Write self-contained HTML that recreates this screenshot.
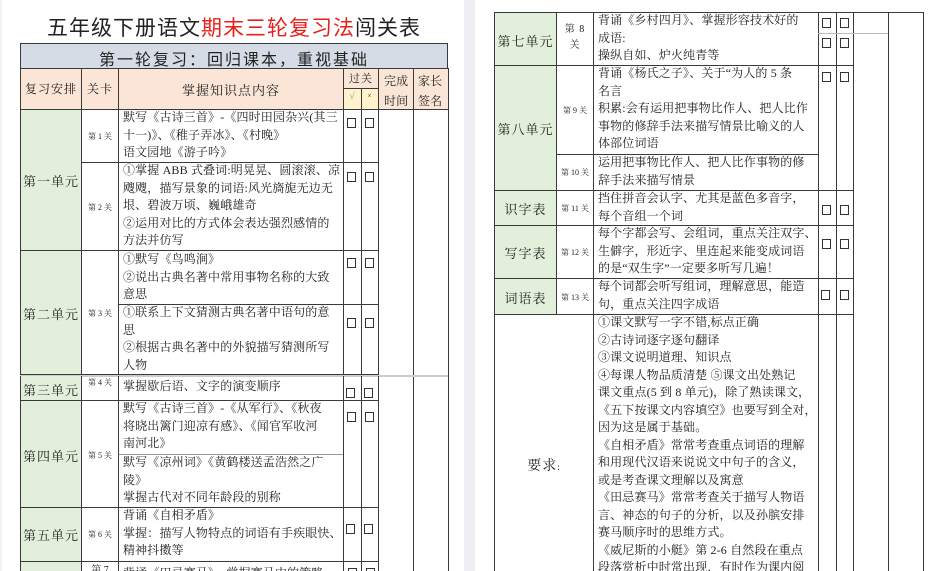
<!DOCTYPE html>
<html style="width:938px;height:571px;overflow:hidden"><head><meta charset="utf-8"><style>
*{margin:0;padding:0;box-sizing:border-box}
body{width:938px;height:571px;overflow:hidden;background:#fff;position:relative;font-family:"Liberation Serif","Noto Serif CJK SC",serif;color:#222}
.c{position:absolute;border:1px solid #3a3a3a}
.t{position:absolute;font-size:12px;line-height:17.5px;white-space:nowrap;letter-spacing:0.15px;overflow:hidden}
.u{position:absolute;font-size:13px;text-align:center;white-space:nowrap;letter-spacing:1px}
.k{position:absolute;font-size:8px;text-align:center;white-space:nowrap}
.b{position:absolute;width:9px;height:10px;border:1px solid #333;background:#fff}
.g{background:#e2efda}
.p{background:#fbe5d6}
</style></head><body>
<div style="position:absolute;left:464px;top:0;width:11px;height:571px;background:#eeeff4"></div>
<div style="position:absolute;left:0;top:0;width:2px;height:571px;background:#f2f2f5"></div>

<div style="position:absolute;left:20px;top:12px;width:428px;text-align:center;font-family:'Liberation Sans','Noto Sans CJK SC',sans-serif;font-size:21px;letter-spacing:1px;color:#222">五年级下册语文<span style="color:#e8201a">期末三轮复习法</span>闯关表</div>
<div class="c" style="left:20px;top:43px;width:428px;height:26px;background:#d6dce5;border-width:1px 1px 0 1px"></div>
<div class="u" style="left:20px;top:46px;width:428px;font-size:16px;letter-spacing:2px;font-family:'Liberation Sans','Noto Sans CJK SC',sans-serif">第一轮复习：回归课本，重视基础</div>
<div class="c p" style="left:20px;top:68px;width:62px;height:42px"></div>
<div class="u" style="left:20px;top:80px;width:62px;font-size:12px">复习安排</div>
<div class="c p" style="left:81px;top:68px;width:38px;height:42px"></div>
<div class="u" style="left:81px;top:80px;width:38px;font-size:12px">关卡</div>
<div class="c p" style="left:118px;top:68px;width:226px;height:42px"></div>
<div class="u" style="left:118px;top:80px;width:226px;font-size:13px">掌握知识点内容</div>
<div class="c p" style="left:343px;top:68px;width:36px;height:21px"></div>
<div class="u" style="left:343px;top:70px;width:36px;font-size:11px">过关</div>
<div class="c" style="left:343px;top:88px;width:19px;height:22px;background:#fff2cc"></div>
<div class="c" style="left:361px;top:88px;width:18px;height:22px;background:#fff2cc"></div>
<div class="u" style="left:343px;top:91px;width:19px;font-size:10px;color:#8a8">√</div>
<div class="u" style="left:361px;top:92px;width:18px;font-size:7px">×</div>
<div class="c p" style="left:378px;top:68px;width:36px;height:42px"></div>
<div class="t" style="left:384px;top:71px;line-height:20px;font-size:12px">完成<br>时间</div>
<div class="c p" style="left:413px;top:68px;width:36px;height:42px"></div>
<div class="t" style="left:418px;top:71px;line-height:20px;font-size:12px">家长<br>签名</div>

<div class="c" style="left:378px;top:109px;width:36px;height:470px"></div>
<div class="c" style="left:413px;top:109px;width:36px;height:470px"></div>

<div class="c g" style="left:20px;top:109px;width:62px;height:142px"></div>
<div class="u" style="left:20px;top:171px;width:62px">第一单元</div>
<div class="c" style="left:81px;top:109px;width:38px;height:54px"></div><div class="k" style="left:81px;top:131px;width:38px">第 1 关</div>
<div class="c" style="left:118px;top:109px;width:226px;height:54px"></div>
<div class="t" style="left:123px;top:109px;width:219px">默写《古诗三首》-《四时田园杂兴(其三<br>十一)》、《稚子弄冰》、《村晚》<br>语文园地《游子吟》</div>
<div class="c" style="left:343px;top:109px;width:19px;height:54px"></div><div class="c" style="left:361px;top:109px;width:18px;height:54px"></div>
<div class="b" style="left:347px;top:118px"></div><div class="b" style="left:365px;top:118px"></div>

<div class="c" style="left:81px;top:162px;width:38px;height:89px"></div><div class="k" style="left:81px;top:202px;width:38px">第 2 关</div>
<div class="c" style="left:118px;top:162px;width:226px;height:89px"></div>
<div class="t" style="left:123px;top:162px;width:219px">①掌握 ABB 式叠词:明晃晃、圆滚滚、凉<br>飕飕，描写景象的词语:风光旖旎无边无<br>垠、碧波万顷、巍峨雄奇<br>②运用对比的方式体会表达强烈感情的<br>方法并仿写</div>
<div class="c" style="left:343px;top:162px;width:19px;height:89px"></div><div class="c" style="left:361px;top:162px;width:18px;height:89px"></div>
<div class="b" style="left:347px;top:172px"></div><div class="b" style="left:365px;top:172px"></div>

<div class="c g" style="left:20px;top:250px;width:62px;height:125px"></div>
<div class="u" style="left:20px;top:304px;width:62px">第二单元</div>
<div class="c" style="left:81px;top:250px;width:38px;height:125px"></div><div class="k" style="left:81px;top:308px;width:38px">第 3 关</div>
<div class="c" style="left:118px;top:250px;width:226px;height:55px"></div>
<div class="t" style="left:123px;top:251px;width:219px">①默写《鸟鸣涧》<br>②说出古典名著中常用事物名称的大致<br>意思</div>
<div class="c" style="left:118px;top:304px;width:226px;height:71px"></div>
<div class="t" style="left:123px;top:304px;width:219px">①联系上下文猜测古典名著中语句的意<br>思<br>②根据古典名著中的外貌描写猜测所写<br>人物</div>
<div class="c" style="left:343px;top:250px;width:19px;height:55px"></div><div class="c" style="left:361px;top:250px;width:18px;height:55px"></div>
<div class="c" style="left:343px;top:304px;width:19px;height:71px"></div><div class="c" style="left:361px;top:304px;width:18px;height:71px"></div>
<div class="b" style="left:347px;top:258px"></div><div class="b" style="left:365px;top:258px"></div>
<div class="b" style="left:347px;top:318px"></div><div class="b" style="left:365px;top:318px"></div>
<div style="position:absolute;left:20px;top:375px;width:428px;height:2px;background:#ccc"></div>

<div class="c g" style="left:20px;top:376px;width:62px;height:25px;border-top:0"></div>
<div class="u" style="left:20px;top:380px;width:62px">第三单元</div>
<div class="c" style="left:81px;top:376px;width:38px;height:25px;border-top:0"></div><div class="k" style="left:81px;top:377px;width:38px">第 4 关</div>
<div class="c" style="left:118px;top:376px;width:226px;height:25px;border-top:0"></div>
<div class="t" style="left:123px;top:378px">掌握歇后语、文字的演变顺序</div>
<div class="c" style="left:343px;top:376px;width:19px;height:25px;border-top:0"></div><div class="c" style="left:361px;top:376px;width:18px;height:25px;border-top:0"></div>
<div class="b" style="left:346px;top:388px"></div><div class="b" style="left:364px;top:388px"></div>

<div class="c g" style="left:20px;top:400px;width:62px;height:108px"></div>
<div class="u" style="left:20px;top:446px;width:62px">第四单元</div>
<div class="c" style="left:81px;top:400px;width:38px;height:108px"></div><div class="k" style="left:81px;top:450px;width:38px">第 5 关</div>
<div class="c" style="left:118px;top:400px;width:226px;height:55px"></div>
<div class="t" style="left:123px;top:400px;width:219px">默写《古诗三首》-《从军行》、《秋夜<br>将晓出篱门迎凉有感》、《闻官军收河<br>南河北》</div>
<div class="c" style="left:118px;top:454px;width:226px;height:54px;border-top-color:#999"></div>
<div class="t" style="left:123px;top:454px;width:219px">默写《凉州词》《黄鹤楼送孟浩然之广<br>陵》<br>掌握古代对不同年龄段的别称</div>
<div class="c" style="left:343px;top:400px;width:19px;height:108px"></div><div class="c" style="left:361px;top:400px;width:18px;height:108px"></div>
<div class="b" style="left:347px;top:412px"></div><div class="b" style="left:365px;top:412px"></div>

<div class="c g" style="left:20px;top:507px;width:62px;height:55px"></div>
<div class="u" style="left:20px;top:525px;width:62px">第五单元</div>
<div class="c" style="left:81px;top:507px;width:38px;height:55px"></div><div class="k" style="left:81px;top:529px;width:38px">第 6 关</div>
<div class="c" style="left:118px;top:507px;width:226px;height:55px"></div>
<div class="t" style="left:123px;top:507px;width:219px">背诵《自相矛盾》<br>掌握：描写人物特点的词语有手疾眼快、<br>精神抖擞等</div>
<div class="c" style="left:343px;top:507px;width:19px;height:55px"></div><div class="c" style="left:361px;top:507px;width:18px;height:55px"></div>
<div class="b" style="left:346px;top:524px"></div><div class="b" style="left:364px;top:524px"></div>

<div class="c g" style="left:20px;top:561px;width:62px;height:30px"></div>
<div class="c" style="left:81px;top:561px;width:38px;height:30px"></div><div class="k" style="left:81px;top:561px;width:38px;font-size:10px">第 7</div>
<div class="c" style="left:118px;top:561px;width:226px;height:30px"></div>
<div class="t" style="left:123px;top:565px">背诵《田忌赛马》，掌握赛马中的策略</div>
<div class="c" style="left:343px;top:561px;width:19px;height:30px"></div><div class="c" style="left:361px;top:561px;width:18px;height:30px"></div>
<div class="b" style="left:348px;top:568px"></div><div class="b" style="left:366px;top:568px"></div>

<!-- RIGHT PAGE -->
<div class="c" style="left:853px;top:12px;width:36px;height:580px"></div>
<div class="c" style="left:888px;top:12px;width:36px;height:580px"></div>

<div class="c g" style="left:494px;top:12px;width:63px;height:54px"></div>
<div class="u" style="left:494px;top:31px;width:63px">第七单元</div>
<div class="c" style="left:556px;top:12px;width:38px;height:54px"></div>
<div class="u" style="left:556px;top:22px;width:38px;font-size:10px;line-height:16px">第 8<br>关</div>
<div class="c" style="left:593px;top:12px;width:226px;height:54px"></div>
<div class="t" style="left:598px;top:12px;width:219px">背诵《乡村四月》、掌握形容技术好的<br>成语:<br>操纵自如、炉火纯青等</div>
<div class="c" style="left:818px;top:12px;width:19px;height:54px"></div><div class="c" style="left:836px;top:12px;width:18px;height:54px"></div>
<div style="position:absolute;left:818px;top:33px;width:70px;height:1px;background:#bbb"></div>
<div class="b" style="left:822px;top:18px"></div><div class="b" style="left:840px;top:18px"></div>
<div class="b" style="left:822px;top:38px"></div><div class="b" style="left:840px;top:38px"></div>

<div class="c g" style="left:494px;top:65px;width:63px;height:126px"></div>
<div class="u" style="left:494px;top:119px;width:63px">第八单元</div>
<div class="c" style="left:556px;top:65px;width:38px;height:90px"></div><div class="k" style="left:556px;top:105px;width:38px">第 9 关</div>
<div class="c" style="left:593px;top:65px;width:226px;height:90px"></div>
<div class="t" style="left:598px;top:65px;width:219px">背诵《杨氏之子》、关于“为人的 5 条<br>名言<br>积累:会有运用把事物比作人、把人比作<br>事物的修辞手法来描写情景比喻义的人<br>体部位词语</div>
<div class="c" style="left:556px;top:154px;width:38px;height:37px"></div><div class="k" style="left:556px;top:167px;width:38px">第 10 关</div>
<div class="c" style="left:593px;top:154px;width:226px;height:37px"></div>
<div class="t" style="left:598px;top:154px;width:219px">运用把事物比作人、把人比作事物的修<br>辞手法来描写情景</div>
<div class="c" style="left:818px;top:65px;width:19px;height:126px"></div><div class="c" style="left:836px;top:65px;width:18px;height:126px"></div>
<div class="b" style="left:822px;top:72px"></div><div class="b" style="left:840px;top:72px"></div>

<div class="c g" style="left:494px;top:190px;width:63px;height:36px"></div>
<div class="u" style="left:494px;top:199px;width:63px">识字表</div>
<div class="c" style="left:556px;top:190px;width:38px;height:36px"></div><div class="k" style="left:556px;top:203px;width:38px">第 11 关</div>
<div class="c" style="left:593px;top:190px;width:226px;height:36px"></div>
<div class="t" style="left:598px;top:190px;width:219px">挡住拼音会认字、尤其是蓝色多音字，<br>每个音组一个词</div>
<div class="c" style="left:818px;top:190px;width:19px;height:36px"></div><div class="c" style="left:836px;top:190px;width:18px;height:36px"></div>
<div class="b" style="left:822px;top:205px"></div><div class="b" style="left:840px;top:205px"></div>

<div class="c g" style="left:494px;top:225px;width:63px;height:54px"></div>
<div class="u" style="left:494px;top:243px;width:63px">写字表</div>
<div class="c" style="left:556px;top:225px;width:38px;height:54px"></div><div class="k" style="left:556px;top:247px;width:38px">第 12 关</div>
<div class="c" style="left:593px;top:225px;width:226px;height:54px"></div>
<div class="t" style="left:598px;top:225px;width:219px">每个字都会写、会组词，重点关注双字、<br>生僻字，形近字、里连起来能变成词语<br>的是“双生字”一定要多听写几遍！</div>
<div class="c" style="left:818px;top:225px;width:19px;height:54px"></div><div class="c" style="left:836px;top:225px;width:18px;height:54px"></div>
<div class="b" style="left:822px;top:239px"></div><div class="b" style="left:840px;top:239px"></div>

<div class="c g" style="left:494px;top:278px;width:63px;height:37px"></div>
<div class="u" style="left:494px;top:288px;width:63px">词语表</div>
<div class="c" style="left:556px;top:278px;width:38px;height:37px"></div><div class="k" style="left:556px;top:292px;width:38px">第 13 关</div>
<div class="c" style="left:593px;top:278px;width:226px;height:37px"></div>
<div class="t" style="left:598px;top:278px;width:219px">每个词都会听写组词，理解意思，能造<br>句，重点关注四字成语</div>
<div class="c" style="left:818px;top:278px;width:19px;height:37px"></div><div class="c" style="left:836px;top:278px;width:18px;height:37px"></div>
<div class="b" style="left:821px;top:290px"></div><div class="b" style="left:840px;top:290px"></div>

<div class="c" style="left:494px;top:314px;width:100px;height:280px"></div>
<div class="u" style="left:494px;top:455px;width:100px;font-size:14px">要求<span style="font-size:9px">:</span></div>
<div class="c" style="left:593px;top:314px;width:226px;height:280px"></div>
<div class="t" style="left:598px;top:314px;width:219px">①课文默写一字不错,标点正确<br>②古诗词逐字逐句翻译<br>③课文说明道理、知识点<br>④每课人物品质清楚 ⑤课文出处熟记<br>课文重点(5 到 8 单元)，除了熟读课文，<br>《五下按课文内容填空》也要写到全对，<br>因为这是属于基础。<br>《自相矛盾》常常考查重点词语的理解<br>和用现代汉语来说说文中句子的含义，<br>或是考查课文理解以及寓意<br>《田忌赛马》常常考查关于描写人物语<br>言、神态的句子的分析，以及孙膑安排<br>赛马顺序时的思维方式。<br>《威尼斯的小艇》第 2-6 自然段在重点<br>段落赏析中时常出现，有时作为课内阅</div>
<div class="c" style="left:818px;top:314px;width:19px;height:280px"></div><div class="c" style="left:836px;top:314px;width:18px;height:280px"></div>
</body></html>
